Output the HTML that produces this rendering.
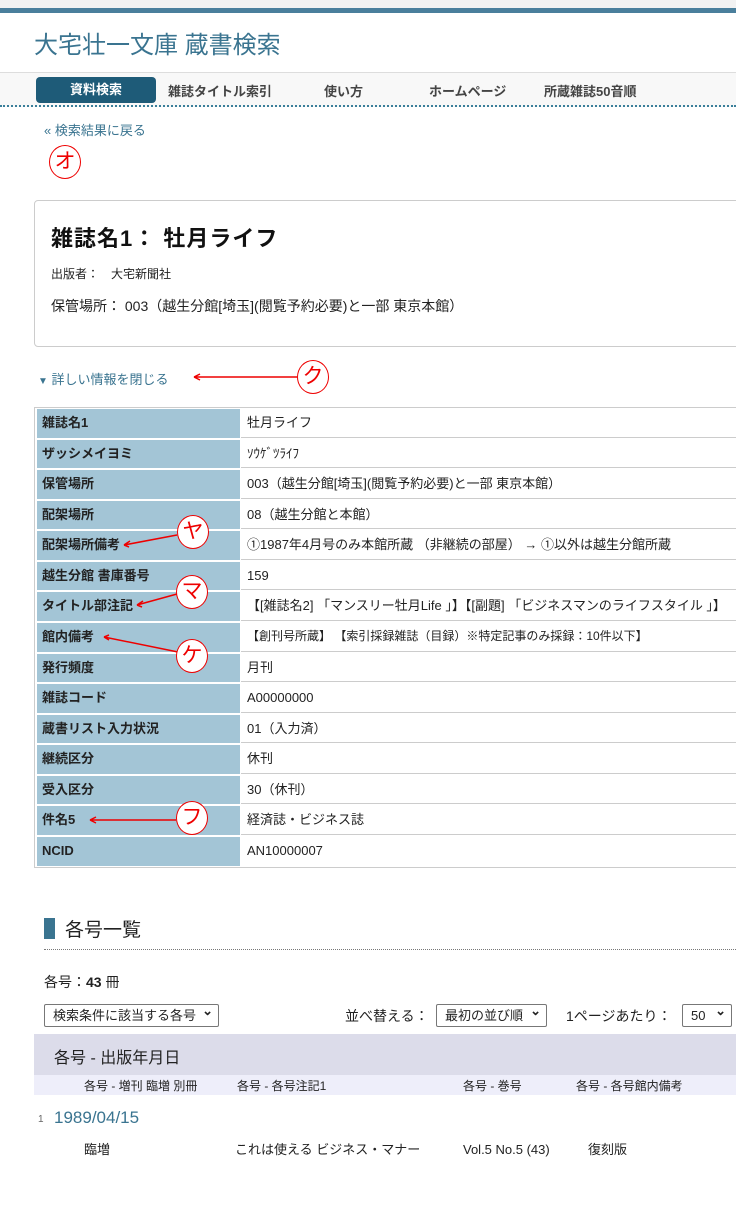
<!DOCTYPE html><html><head><meta charset="utf-8"><style>
*{margin:0;padding:0;box-sizing:border-box}
body{width:736px;height:1217px;overflow:hidden;background:#fff;font-family:"Liberation Sans","Noto Sans CJK JP",sans-serif;color:#222;position:relative;font-size:13px}
.a{position:absolute;white-space:nowrap}
.circ{position:absolute;width:32px;height:34px;border:1.5px solid #e00;border-radius:50%;color:#e00;font-size:21px;font-weight:normal;text-align:center;line-height:31px;background:#fff}
.row{position:absolute;left:34px;width:702px;height:30.57px}
.lb{position:absolute;left:3px;top:2px;width:203px;height:28.5px;background:#a3c5d6;font-weight:bold;font-size:13px;line-height:28px;padding-left:5px}
.vl{position:absolute;left:207px;right:0;top:0;height:30.57px;border-bottom:1px solid #ccc;line-height:31px;padding-left:6px;font-size:13px}
.sel{position:absolute;height:23px;border:1px solid #777;border-radius:2px;font-size:13px;line-height:21px;padding-left:8px;background:#fff}
.sel:after{content:"⌄";position:absolute;right:5px;top:-5px;font-weight:bold}
</style></head><body>
<div class="a" style="left:0;top:0;width:736px;height:8px;background:#f2f2f2"></div>
<div class="a" style="left:0;top:8px;width:736px;height:5px;background:#4a7f9c"></div>
<div class="a" style="left:34px;top:25px;font-size:24px;color:#3a7490">大宅壮一文庫 蔵書検索</div>
<div class="a" style="left:0;top:72px;width:736px;height:35px;background:#f8f8f8;border-top:1px solid #ddd;border-bottom:2px dotted #3a7f9a"></div>
<div class="a" style="left:36px;top:77px;width:120px;height:26px;background:#1e5b78;border-radius:4px;color:#fff;font-weight:bold;text-align:center;line-height:26px">資料検索</div>
<div class="a" style="left:168px;top:81px;font-weight:bold;color:#444">雑誌タイトル索引</div>
<div class="a" style="left:324px;top:81px;font-weight:bold;color:#444">使い方</div>
<div class="a" style="left:429px;top:81px;font-weight:bold;color:#444">ホームページ</div>
<div class="a" style="left:544px;top:81px;font-weight:bold;color:#444">所蔵雑誌50音順</div>
<div class="a" style="left:44px;top:120px;color:#3a7490">« 検索結果に戻る</div>
<div class="circ" style="left:49px;top:145px">オ</div>
<div class="a" style="left:34px;top:200px;width:710px;height:147px;border:1px solid #ccc;border-radius:4px"></div>
<div class="a" style="left:51px;top:221px;font-size:22px;font-weight:bold;color:#111;letter-spacing:1px">雑誌名1： 牡月ライフ</div>
<div class="a" style="left:51px;top:265px;font-size:12px">出版者：　大宅新聞社</div>
<div class="a" style="left:51px;top:296px;font-size:14px">保管場所：  003（越生分館[埼玉](閲覧予約必要)と一部 東京本館）</div>
<div class="a" style="left:38px;top:369px;color:#3a7490"><span style="font-size:10px">▼</span> 詳しい情報を閉じる</div>
<div class="circ" style="left:297px;top:360px">ク</div>
<div class="a" style="left:34px;top:407px;width:702px;height:461px;border:1px solid #ccc;border-right:none"></div>
<div class="row" style="top:407px"><div class="lb">雑誌名1</div><div class="vl">牡月ライフ</div></div>
<div class="row" style="top:437.57px"><div class="lb">ザッシメイヨミ</div><div class="vl">ｿｳｹﾞﾂﾗｲﾌ</div></div>
<div class="row" style="top:468.14px"><div class="lb">保管場所</div><div class="vl">003（越生分館[埼玉](閲覧予約必要)と一部 東京本館）</div></div>
<div class="row" style="top:498.71px"><div class="lb">配架場所</div><div class="vl">08（越生分館と本館）</div></div>
<div class="row" style="top:529.28px"><div class="lb">配架場所備考</div><div class="vl">①1987年4月号のみ本館所蔵 （非継続の部屋） → ①以外は越生分館所蔵</div></div>
<div class="row" style="top:559.85px"><div class="lb">越生分館 書庫番号</div><div class="vl">159</div></div>
<div class="row" style="top:590.42px"><div class="lb">タイトル部注記</div><div class="vl">【[雑誌名2] 「マンスリー牡月Life 」】【[副題] 「ビジネスマンのライフスタイル 」】</div></div>
<div class="row" style="top:621px"><div class="lb">館内備考</div><div class="vl" style="font-size:12px">【創刊号所蔵】 【索引採録雑誌（目録）※特定記事のみ採録：10件以下】</div></div>
<div class="row" style="top:651.57px"><div class="lb">発行頻度</div><div class="vl">月刊</div></div>
<div class="row" style="top:682.14px"><div class="lb">雑誌コード</div><div class="vl">A00000000</div></div>
<div class="row" style="top:712.71px"><div class="lb">蔵書リスト入力状況</div><div class="vl">01（入力済）</div></div>
<div class="row" style="top:743.28px"><div class="lb">継続区分</div><div class="vl">休刊</div></div>
<div class="row" style="top:773.85px"><div class="lb">受入区分</div><div class="vl">30（休刊）</div></div>
<div class="row" style="top:804.42px"><div class="lb">件名5</div><div class="vl">経済誌・ビジネス誌</div></div>
<div class="row" style="top:835px"><div class="lb">NCID</div><div class="vl" style="border:none">AN10000007</div></div>
<svg class="a" style="left:0;top:0" width="736" height="1217"><g stroke="#e00" stroke-width="1.5" fill="none">
<path d="M297 377H194M194 377l6-3M194 377l6 3"/>
<path d="M177 535L124 545M124 545l6-4M124 545l5 2"/>
<path d="M177 594L137 605M137 605l6-4M137 605l5 2"/>
<path d="M178 652L104 637M104 637l5 -2M104 637l5 3"/>
<path d="M176 820H90M90 820l6-3M90 820l6 3"/>
</g></svg>
<div class="circ" style="left:177px;top:515px">ヤ</div>
<div class="circ" style="left:176px;top:575px">マ</div>
<div class="circ" style="left:176px;top:639px">ケ</div>
<div class="circ" style="left:176px;top:801px">フ</div>
<div class="a" style="left:44px;top:918px;width:11px;height:21px;background:#3a7490"></div>
<div class="a" style="left:65px;top:915px;font-size:19px;color:#222">各号一覧</div>
<div class="a" style="left:44px;top:949px;width:692px;border-top:1px dotted #777"></div>
<div class="a" style="left:44px;top:972px;font-size:14px">各号：<b>43</b> 冊</div>
<div class="sel" style="left:44px;top:1004px;width:175px">検索条件に該当する各号</div>
<div class="a" style="left:345px;top:1006px;font-size:14px">並べ替える：</div>
<div class="sel" style="left:436px;top:1004px;width:111px">最初の並び順</div>
<div class="a" style="left:566px;top:1006px;font-size:14px">1ページあたり：</div>
<div class="sel" style="left:682px;top:1004px;width:50px">50</div>
<div class="a" style="left:34px;top:1034px;width:702px;height:41px;background:#dcdcea"></div>
<div class="a" style="left:54px;top:1044px;font-size:16px">各号 - 出版年月日</div>
<div class="a" style="left:34px;top:1075px;width:702px;height:20px;background:#eeeefa"></div>
<div class="a" style="left:84px;top:1077px;font-size:12px">各号 - 増刊 臨増 別冊</div>
<div class="a" style="left:237px;top:1077px;font-size:12px">各号 - 各号注記1</div>
<div class="a" style="left:463px;top:1077px;font-size:12px">各号 - 巻号</div>
<div class="a" style="left:576px;top:1077px;font-size:12px">各号 - 各号館内備考</div>
<div class="a" style="left:38px;top:1114px;font-size:10px;color:#666">1</div>
<div class="a" style="left:54px;top:1108px;font-size:17px;color:#3a7490">1989/04/15</div>
<div class="a" style="left:84px;top:1142px;line-height:16px">臨増</div>
<div class="a" style="left:235px;top:1142px;line-height:16px">これは使える ビジネス・マナー</div>
<div class="a" style="left:463px;top:1142px;line-height:16px">Vol.5 No.5 (43)</div>
<div class="a" style="left:588px;top:1142px;line-height:16px">復刻版</div>
</body></html>
